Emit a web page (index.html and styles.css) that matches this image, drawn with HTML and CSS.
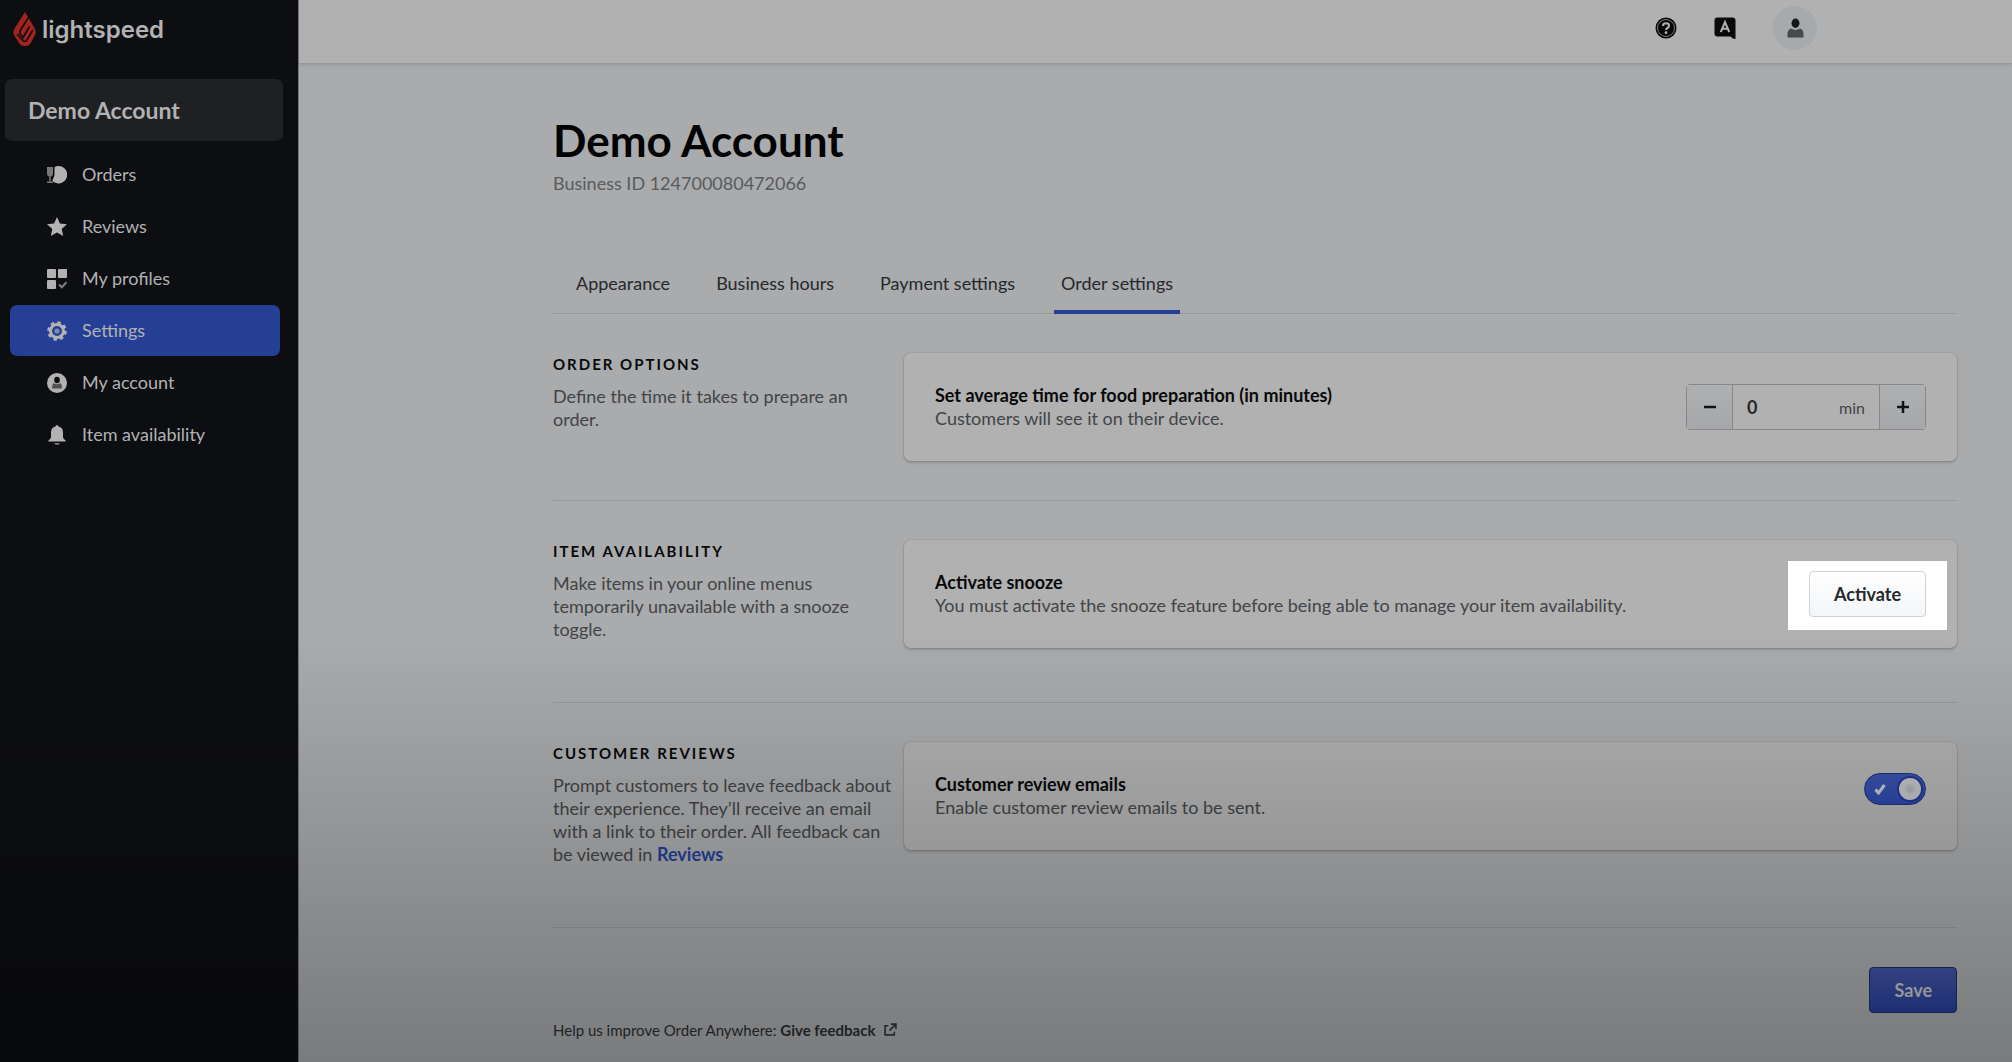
FILE: index.html
```html
<!DOCTYPE html>
<html lang="en">
<head>
    <meta charset="UTF-8">
    <meta name="viewport" content="width=device-width, initial-scale=1.0">
    <title>Order settings - Demo Account</title>
    <link rel="stylesheet" href="styles.css">
</head>
<body>
    <aside class="sidebar">
        <a class="brand" href="#">
            <svg class="brand-mark" viewBox="0 0 23 34" aria-hidden="true">
                <path class="flame" d="M12 0 L21.500 16 Q24 20 21.500 24 L17.500 31.500 Q16 34 12 34 Q8 34 6.500 31.500 L1 23 Q-.5 20 1.500 16.500 Z"/>
                <path class="flame-cut" d="M15.500 5.500 L7.500 18 Q6 21 8 23 L10 25.500 L16.500 14.500 M20 18 L13.500 28.500 Q12 30.500 10 28.500 L4 22"/>
            </svg>
            <span class="brand-name">lightspeed</span>
        </a>
        <button type="button" class="account-switch">Demo Account</button>
        <nav class="side-nav">
            <a href="#">
                <svg viewBox="0 0 20 20" aria-hidden="true">
                    <path class="muted" d="M0 2h6v6.500q0 2.500-2.300 3v5H6V18H0v-1.500h2.300v-5Q0 11 0 8.500z"/>
                    <path d="M7.500 2.200Q9 1 11.500 1a8.700 8.700 0 1 1-6 15q0-2 1-3 1-2 1-4z"/>
                </svg>
                Orders
            </a>
            <a href="#">
                <svg viewBox="0 0 20 20" aria-hidden="true">
                    <path d="M10 0l2.900 6.600 7.100.7-5.300 4.700 1.500 7L10 15.400 3.800 19l1.500-7L0 7.300l7.100-.7z"/>
                </svg>
                Reviews
            </a>
            <a href="#">
                <svg viewBox="0 0 20 20" aria-hidden="true">
                    <rect width="9" height="9" rx="1"/>
                    <rect x="11" width="9" height="9" rx="1"/>
                    <rect y="11" width="9" height="9" rx="1"/>
                    <path class="tick" d="M12 15.500l2.800 2.800 4.700-5"/>
                </svg>
                My profiles
            </a>
            <a class="active" href="#">
                <svg viewBox="0 0 20 20" aria-hidden="true">
                    <circle class="gear-teeth" cx="10" cy="10" r="8.300"/>
                    <circle class="gear-ring" cx="10" cy="10" r="6.500"/>
                    <circle class="muted" cx="10" cy="10" r="2.600"/>
                </svg>
                Settings
            </a>
            <a href="#">
                <svg viewBox="0 0 20 20" aria-hidden="true">
                    <circle cx="10" cy="10" r="10"/>
                    <ellipse class="cut" cx="10" cy="7" rx="2.800" ry="3.300"/>
                    <path class="cut-soft" d="M6.500 10q3.500 2.500 7 0 1.700 2 1.700 5.500H4.800q0-3.500 1.700-5.500z"/>
                </svg>
                My account
            </a>
            <a href="#">
                <svg viewBox="0 0 20 20" aria-hidden="true">
                    <path d="M10 0q1.300 0 1.500 1.500 4.500 1 4.500 6v4.500q.3 2.500 2.500 3.300V16.500h-17v-1.200Q3.700 14.500 4 12V7.500q0-5 4.500-6Q8.700 0 10 0z"/>
                    <path class="muted" d="M7 18h6q-1 2-3 2t-3-2z"/>
                </svg>
                Item availability
            </a>
        </nav>
    </aside>

    <div class="page">
        <header class="topbar">
            <button type="button" class="icon-btn" aria-label="Help">
                <svg viewBox="0 0 22 22" aria-hidden="true">
                    <circle cx="11" cy="11" r="10.500"/>
                    <circle class="ring" cx="11" cy="11" r="8.500"/>
                    <path class="line" d="M8 9q0-2.700 3-2.700t3 2.400q0 1.500-1.500 2.300-1.500.8-1.500 2"/>
                    <circle class="dot" cx="11" cy="15.700" r="1.400"/>
                </svg>
            </button>
            <button type="button" class="icon-btn" aria-label="Language">
                <svg viewBox="0 0 22 22" aria-hidden="true">
                    <path d="M3.500 0.500h15q3 0 3 3V22q-3 0-5-2.500h-13q-3 0-3-3v-13q0-3 3-3z"/>
                    <path class="line" d="M6.800 15 L11 5 L15.200 15 M8.300 11.800h5.400"/>
                </svg>
            </button>
            <button type="button" class="avatar" aria-label="Account">
                <svg viewBox="0 0 18 20" aria-hidden="true">
                    <ellipse cx="9" cy="5" rx="4.200" ry="5"/>
                    <path class="shoulders" d="M4 10.500q5 3 10 0 3.500 2 3.500 6V20H.5v-3.500q0-4 3.500-6z"/>
                </svg>
            </button>
        </header>

        <main class="content">
            <h1>Demo Account</h1>
            <p class="business-id">Business ID 124700080472066</p>

            <nav class="tabs">
                <a href="#">Appearance</a>
                <a href="#">Business hours</a>
                <a href="#">Payment settings</a>
                <a class="selected" href="#">Order settings</a>
            </nav>

            <form>
                <section class="setting">
                    <div class="setting-info">
                        <h2>Order options</h2>
                        <p>Define the time it takes to prepare an order.</p>
                    </div>
                    <div class="card">
                        <div class="card-text">
                            <label for="prepTime">Set average time for food preparation (in minutes)</label>
                            <p>Customers will see it on their device.</p>
                        </div>
                        <div class="stepper">
                            <button type="button" aria-label="Decrease">
                                <svg viewBox="0 0 14 14" aria-hidden="true"><path d="M1 7h12"/></svg>
                            </button>
                            <div class="stepper-field">
                                <input type="text" inputmode="numeric" id="prepTime" name="prepTime" value="0">
                                <span>min</span>
                            </div>
                            <button type="button" aria-label="Increase">
                                <svg viewBox="0 0 14 14" aria-hidden="true"><path d="M1 7h12M7 1v12"/></svg>
                            </button>
                        </div>
                    </div>
                </section>

                <section class="setting">
                    <div class="setting-info">
                        <h2>Item availability</h2>
                        <p>Make items in your online menus temporarily unavailable with a snooze toggle.</p>
                    </div>
                    <div class="card">
                        <div class="card-text">
                            <h3>Activate snooze</h3>
                            <p>You must activate the snooze feature before being able to manage your item availability.</p>
                        </div>
                        <div class="spotlight">
                            <button type="button" class="btn">Activate</button>
                        </div>
                    </div>
                </section>

                <section class="setting">
                    <div class="setting-info">
                        <h2>Customer reviews</h2>
                        <p>Prompt customers to leave feedback about their experience. They’ll receive an email with a link to their order. All feedback can be viewed in <a href="#">Reviews</a></p>
                    </div>
                    <div class="card">
                        <div class="card-text">
                            <label for="reviewEmails">Customer review emails</label>
                            <p>Enable customer review emails to be sent.</p>
                        </div>
                        <div class="toggle">
                            <input type="checkbox" id="reviewEmails" name="reviewEmails" checked>
                            <svg class="toggle-tick" viewBox="0 0 12 12" aria-hidden="true"><path d="M1.500 6.500l3 3.500 6-8"/></svg>
                            <span class="toggle-knob"></span>
                        </div>
                    </div>
                </section>

                <div class="actions">
                    <button type="submit" class="btn btn-primary">Save</button>
                </div>
            </form>

            <footer class="feedback">
                Help us improve Order Anywhere: <a href="#">Give feedback
                    <svg viewBox="0 0 12 12" aria-hidden="true"><path d="M4 2.500H1V11h8.500V8M5 7l5.500-5.500M6.500 1H11v4.500"/></svg></a>
            </footer>
        </main>
    </div>
</body>
</html>
```

FILE: styles.css
```css
:root {
    --sidebar-bg: #0d0e12;
    --sidebar-text: #b2b2b3;
    --page-bg: #a9abad;
    --surface: #b1b1b1;
    --line: #979a9c;
    --text-dark: #08090b;
    --text: #26282b;
    --text-soft: #424447;
    --blue: #263f96;
}

* {
    box-sizing: border-box;
}

body {
    display: flex;
    min-height: 100vh;
    margin: 0;
    font-family: Lato, "Open Sans", sans-serif;
    font-size: 18px;
    line-height: 23px;
    color: var(--text);
    background: var(--page-bg);
}

/* shade that fades in towards the bottom of the window */
body::after {
    content: "";
    position: fixed;
    inset: 60% 0 0;
    background: linear-gradient(rgba(0, 0, 0, 0), rgba(0, 0, 0, 0.28));
    pointer-events: none;
    z-index: 10;
}

h1,
h2,
h3,
p {
    margin: 0;
}

a {
    color: inherit;
    text-decoration: none;
}

button,
input {
    font: inherit;
    color: inherit;
}

button {
    cursor: pointer;
}

/* Sidebar */
.sidebar {
    flex: 0 0 299px;
    background: var(--sidebar-bg);
    border-right: 1px solid #77797b;
    color: var(--sidebar-text);
}

.brand {
    display: flex;
    align-items: center;
    gap: 6px;
    padding: 12px 0 0 13px;
}

.brand-mark {
    width: 23px;
    height: 34px;
}

.flame {
    fill: #a3231d;
}

.flame-cut {
    fill: none;
    stroke: var(--sidebar-bg);
    stroke-width: 1.6;
}

.brand-name {
    font-family: Inter, sans-serif;
    font-size: 24px;
    font-weight: 600;
}

.account-switch {
    display: block;
    width: 278px;
    height: 62px;
    margin: 33px 0 8px 5px;
    padding: 0 23px;
    border: none;
    border-radius: 7px;
    background: #1e2024;
    font-size: 23px;
    font-weight: bold;
    text-align: left;
}

.side-nav {
    display: flex;
    flex-direction: column;
    gap: 1px;
    padding: 0 18px 0 10px;
}

.side-nav a {
    display: flex;
    align-items: center;
    gap: 15px;
    height: 51px;
    padding-left: 37px;
    border-radius: 7px;
}

.side-nav a.active {
    background: var(--blue);
}

.side-nav svg {
    width: 20px;
    height: 20px;
    fill: var(--sidebar-text);
}

.side-nav .muted {
    opacity: 0.65;
}

.side-nav .tick {
    fill: none;
    stroke: #7d7e80;
    stroke-width: 2;
}

.side-nav .gear-ring,
.side-nav .gear-teeth {
    fill: none;
    stroke: var(--sidebar-text);
    stroke-width: 3;
}

.side-nav .gear-teeth {
    stroke-dasharray: 3.4 3.12;
}

.side-nav .cut {
    fill: var(--sidebar-bg);
}

.side-nav .cut-soft {
    fill: #505154;
}

/* Top bar */
.page {
    flex: 1;
    min-width: 0;
}

.topbar {
    display: flex;
    align-items: center;
    justify-content: flex-end;
    gap: 37px;
    height: 64px;
    padding: 0 195px 8px 0;
    background: var(--surface);
    border-bottom: 1px solid #97989a;
    box-shadow: 0 1px 3px rgba(0, 0, 0, 0.12);
}

.icon-btn,
.avatar {
    display: flex;
    align-items: center;
    justify-content: center;
    padding: 0;
    border: none;
    background: none;
}

.icon-btn svg {
    width: 22px;
    height: 22px;
    fill: #08090a;
}

.icon-btn .ring {
    fill: none;
    stroke: #77797a;
    stroke-width: 1;
}

.icon-btn .line {
    fill: none;
    stroke: var(--surface);
    stroke-width: 2;
}

.icon-btn .dot {
    fill: var(--surface);
}

.avatar {
    width: 44px;
    height: 44px;
    border-radius: 50%;
    background: #a7aaad;
}

.avatar svg {
    width: 17px;
    height: 20px;
    fill: #15171b;
}

.avatar .shoulders {
    fill: #46494d;
}

/* Page content */
.content {
    padding: 48px 55px 12px 254px;
}

h1 {
    font-size: 44px;
    line-height: 56px;
    color: #020202;
}

.business-id {
    margin-top: 4px;
    color: #595b5e;
}

.tabs {
    display: flex;
    gap: 32px;
    margin-top: 68px;
    padding-left: 16px;
    border-bottom: 1px solid var(--line);
}

.tabs a {
    margin-bottom: -1px;
    padding: 9px 7px 15px;
    border-bottom: 4px solid transparent;
}

.tabs a.selected {
    border-color: var(--blue);
}

.setting {
    display: grid;
    grid-template-columns: minmax(0, 1fr) minmax(0, 3fr);
    align-items: start;
    padding: 39px 0;
    border-bottom: 1px solid var(--line);
}

.setting-info {
    padding: 0 12px 22px 0;
    color: var(--text-soft);
}

.setting-info h2 {
    margin-bottom: 9px;
    font-size: 15px;
    line-height: 23px;
    letter-spacing: 2px;
    text-transform: uppercase;
    color: var(--text-dark);
}

.setting-info a {
    font-weight: bold;
    color: var(--blue);
}

.card {
    display: flex;
    align-items: flex-start;
    justify-content: space-between;
    gap: 24px;
    padding: 31px;
    border-radius: 7px;
    background: var(--surface);
    box-shadow: 0 0 0 1px rgba(0, 0, 0, 0.06), 0 2px 3px rgba(0, 0, 0, 0.16);
}

.card-text {
    color: var(--text-soft);
}

.card-text h3,
.card-text label {
    display: block;
    font-size: 18px;
    font-weight: bold;
    color: var(--text-dark);
}

.stepper {
    display: flex;
    height: 46px;
    border: 1px solid #858789;
    border-radius: 4px;
}

.stepper button {
    display: flex;
    align-items: center;
    justify-content: center;
    width: 45px;
    padding: 0;
    border: none;
    background: linear-gradient(#afb0b1, #a5a7aa);
}

.stepper svg {
    width: 14px;
    height: 14px;
    fill: none;
    stroke: #111214;
    stroke-width: 2.5;
}

.stepper-field {
    display: flex;
    align-items: center;
    width: 148px;
    padding: 0 14px;
    border: solid #858789;
    border-width: 0 1px;
}

.stepper-field input {
    flex: 1;
    min-width: 0;
    padding: 0;
    border: none;
    background: none;
    font-weight: bold;
}

.stepper-field span {
    font-size: 16px;
    color: var(--text-soft);
}

.btn {
    height: 46px;
    padding: 0 24px;
    border: 1px solid #cfd2d6;
    border-radius: 4px;
    background: linear-gradient(#ffffff, #f3f5f8);
    font-weight: bold;
}

.btn-primary {
    border-color: #1c2d6b;
    background: linear-gradient(#4354a6, #263f98);
    color: #c4c4c6;
}

.spotlight {
    margin: -10px -21px -13px;
    padding: 10px 21px 13px;
    background: #ffffff;
}

.toggle {
    position: relative;
    width: 62px;
    height: 32px;
}

.toggle input {
    appearance: none;
    width: 62px;
    height: 32px;
    margin: 0;
    border: 1px solid #1e3078;
    border-radius: 16px;
    background: linear-gradient(#3b53ab, #2a46a6);
    cursor: pointer;
}

.toggle-tick {
    position: absolute;
    top: 10px;
    left: 10px;
    width: 12px;
    height: 12px;
    fill: none;
    stroke: #c4c5c8;
    stroke-width: 3;
    pointer-events: none;
}

.toggle-knob {
    position: absolute;
    top: 5px;
    right: 5px;
    width: 22px;
    height: 22px;
    border-radius: 50%;
    background: radial-gradient(circle, #a9abb1 2px, #bfc0c2 6px);
    box-shadow: 0 0 0 2px #213690;
    pointer-events: none;
}

.actions {
    display: flex;
    justify-content: flex-end;
    padding-top: 39px;
}

.feedback {
    margin-top: 6px;
    font-size: 15px;
    color: #2c2e31;
}

.feedback a {
    font-weight: bold;
}

.feedback svg {
    width: 13px;
    height: 13px;
    margin-left: 5px;
    fill: none;
    stroke: #333538;
    stroke-width: 1.5;
}
```
